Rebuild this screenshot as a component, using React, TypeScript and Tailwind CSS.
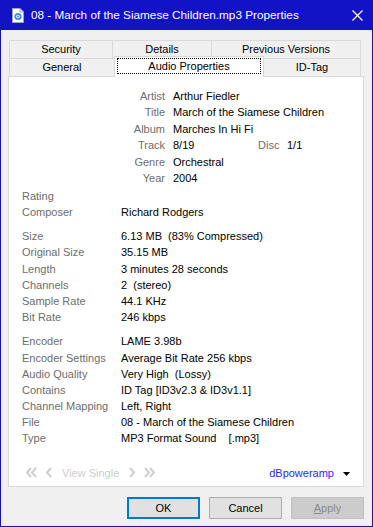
import React from 'react'

const topRows: [string, string][] = [
  ['Artist', 'Arthur Fiedler'],
  ['Title', 'March of the Siamese Children'],
  ['Album', 'Marches In Hi Fi'],
  ['Track', '8/19'],
  ['Genre', 'Orchestral'],
  ['Year', '2004'],
]

const audioRows: [string, string][] = [
  ['Size', '6.13 MB  (83% Compressed)'],
  ['Original Size', '35.15 MB'],
  ['Length', '3 minutes 28 seconds'],
  ['Channels', '2  (stereo)'],
  ['Sample Rate', '44.1 KHz'],
  ['Bit Rate', '246 kbps'],
]

const encoderRows: [string, string][] = [
  ['Encoder', 'LAME 3.98b'],
  ['Encoder Settings', 'Average Bit Rate 256 kbps'],
  ['Audio Quality', 'Very High  (Lossy)'],
  ['Contains', 'ID Tag [ID3v2.3 & ID3v1.1]'],
  ['Channel Mapping', 'Left, Right'],
  ['File', '08 - March of the Siamese Children'],
  ['Type', 'MP3 Format Sound    [.mp3]'],
]

function Row({ label, value }: { label: string; value: string }) {
  return (
    <div className="flex h-[16.2px] items-center pl-[13px]">
      <div className="w-[99px] text-[#6d6d6d]">{label}</div>
      <div className="whitespace-pre text-black">{value}</div>
    </div>
  )
}

function Chevron({ double, left }: { double?: boolean; left?: boolean }) {
  const w = double ? 12 : 7
  const pts = left ? 'M6 1 L2 5.5 L6 10' : 'M1 1 L5 5.5 L1 10'
  const pts2 = left ? 'M11 1 L7 5.5 L11 10' : 'M6 1 L10 5.5 L6 10'
  return (
    <svg width={w} height="11" viewBox={`0 0 ${w} 11`} fill="none" stroke="#cfcfcf" strokeWidth="2">
      <path d={pts} />
      {double && <path d={pts2} />}
    </svg>
  )
}

function Tab({ label, className }: { label: string; className: string }) {
  return (
    <div className={`flex items-center justify-center border border-b-0 border-[#d9d9d9] bg-[#f0f0f0] ${className}`}>
      {label}
    </div>
  )
}

export default function App() {
  return (
    <div className="flex h-[527px] w-[373px] flex-col bg-[#1212c6] font-['Liberation_Sans',Arial,sans-serif] text-[11px] text-black">
      {/* title bar */}
      <div className="flex h-[30px] shrink-0 items-center text-white">
        <svg className="ml-[12px] mr-[7px]" width="12" height="15" viewBox="0 0 12 15">
          <path d="M0.5 0.5 H8 L11.5 4 V14.5 H0.5 Z" fill="#fff" stroke="#9aa4b8" />
          <path d="M8 0.5 V4 H11.5" fill="#e4e8f0" stroke="#9aa4b8" />
          <circle cx="6" cy="8.5" r="3.6" fill="#3a8ee6" />
          <circle cx="6" cy="8.5" r="1.8" fill="#fff" />
          <circle cx="6" cy="8.5" r="0.9" fill="#3a8ee6" />
        </svg>
        <div className="text-[11.75px]">08 - March of the Siamese Children.mp3 Properties</div>
        <svg className="ml-auto mr-[10px]" width="11" height="11" viewBox="0 0 11 11" stroke="#fff" strokeWidth="1.2">
          <path d="M0.5 0.5 L10.5 10.5 M10.5 0.5 L0.5 10.5" />
        </svg>
      </div>

      {/* body */}
      <div className="mx-[1px] mb-[1px] flex flex-1 flex-col bg-[#f0f0f0] pl-[7px] pr-[8px] pt-[10px] pb-[7px]">
        {/* tabs */}
        <div className="ml-[1px] mr-[3px] flex h-[18px]">
          <Tab label="Security" className="w-[104px]" />
          <Tab label="Details" className="w-[99px] border-l-0" />
          <Tab label="Previous Versions" className="flex-1 border-l-0" />
        </div>
        <div className="ml-[1px] mr-[3px] flex h-[18px]">
          <Tab label="General" className="w-[106px]" />
          <div className="relative z-10 -mx-[1px] -mb-[1px] -mt-[2px] flex h-[21px] w-[150px] border border-b-0 border-[#d9d9d9] bg-white px-[2px] pb-[3px] pt-[1px]">
            <div className="flex flex-1 items-center justify-center border border-dotted border-black">
              Audio Properties
            </div>
          </div>
          <Tab label="ID-Tag" className="flex-1" />
        </div>

        {/* panel */}
        <div className="flex flex-1 flex-col border border-[#d9d9d9] bg-white pt-[11px]">
          {topRows.map(([label, value]) => (
            <div key={label} className="flex h-[16.4px] items-center">
              <div className="w-[156px] text-right text-[#6d6d6d]">{label}</div>
              <div className="ml-[8px] flex">
                <span className={label === 'Track' ? 'w-[85px]' : ''}>{value}</span>
                {label === 'Track' && (
                  <>
                    <span className="w-[29px] text-[#6d6d6d]">Disc</span>
                    <span>1/1</span>
                  </>
                )}
              </div>
            </div>
          ))}

          <div className="mt-[2px] flex h-[16px] items-center pl-[13px] text-[#6d6d6d]">Rating</div>
          <div className="flex h-[16px] items-center pl-[13px]">
            <div className="w-[99px] text-[#6d6d6d]">Composer</div>
            <div>Richard Rodgers</div>
          </div>

          <div className="mt-[8px]">
            {audioRows.map(([l, v]) => (
              <Row key={l} label={l} value={v} />
            ))}
          </div>

          <div className="mt-[8px]">
            {encoderRows.map(([l, v]) => (
              <Row key={l} label={l} value={v} />
            ))}
          </div>

          {/* navigation */}
          <div className="mt-[18px] flex h-[16px] items-center pl-[16px] pr-[13px]">
            <Chevron double left />
            <div className="ml-[8px]">
              <Chevron left />
            </div>
            <div className="ml-[10px] text-[#cdcdcd]">View Single</div>
            <div className="ml-[10px]">
              <Chevron />
            </div>
            <div className="ml-[8px]">
              <Chevron double />
            </div>
            <div className="ml-auto text-[#2727ff]">dBpoweramp</div>
            <svg className="ml-[9px] mt-[3px]" width="7" height="4" viewBox="0 0 7 4">
              <path d="M0 0 H7 L3.5 4 Z" fill="#000" />
            </svg>
          </div>
        </div>

        {/* buttons */}
        <div className="mt-[10px] flex h-[22px] justify-end gap-[9px]">
          <button className="w-[73px] border-2 border-[#0078d7] bg-[#e1e1e1]">OK</button>
          <button className="w-[73px] border border-[#adadad] bg-[#e1e1e1]">Cancel</button>
          <button className="w-[73px] border border-[#bfbfbf] bg-[#cccccc] text-[#8a8a8a]">
            <span className="underline">A</span>pply
          </button>
        </div>
      </div>
    </div>
  )
}
